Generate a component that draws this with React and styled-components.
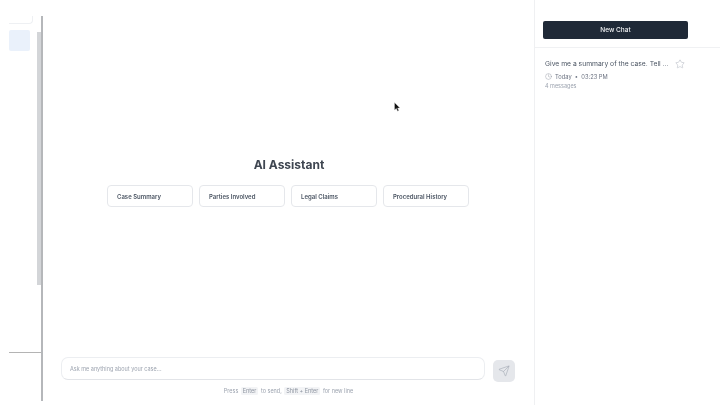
import styled, { createGlobalStyle } from "styled-components";
import { Clock, Star, Send } from "lucide-react";

const GlobalStyle = createGlobalStyle`
  html, body {
    margin: 0;
    height: 100%;
    background: #fff;
    overflow: hidden;
  }
  #root {
    height: 100%;
  }
  * {
    box-sizing: border-box;
  }
`;

const Page = styled.div`
  position: relative;
  display: flex;
  width: 720px;
  height: 405px;
  font-family: Inter, "Liberation Sans", sans-serif;
  color: #374151;
  filter: blur(0.45px);
`;

const Rail = styled.aside`
  display: flex;
  flex: 0 0 43px;
`;

const RailBody = styled.div`
  flex: 1;
  display: flex;
  flex-direction: column;
  padding-left: 9px;
`;

const RailCard = styled.div`
  width: 24px;
  height: 8px;
  margin-top: 16px;
  border-right: 1px solid #eef0f3;
  border-bottom: 1px solid #eef0f3;
  border-bottom-right-radius: 4px;
`;

const RailTile = styled.div`
  width: 21px;
  height: 21px;
  margin-top: 6px;
  border-radius: 2px;
  background: #eaf1fb;
`;

const RailDivider = styled.div`
  height: 1px;
  margin-top: 301px;
  margin-right: -6px;
  background: #b4b4b4;
`;

const Track = styled.div`
  flex: 0 0 6px;
  margin: 16px 0 4px;
  padding-top: 16px;
  border-right: 2px solid #b5b7ba;
`;

const Thumb = styled.div`
  height: 253px;
  background: #d3d5d8;
`;

const Main = styled.main`
  flex: 1;
  display: flex;
  flex-direction: column;
  align-items: center;
  min-width: 0;
`;

const Welcome = styled.div`
  display: flex;
  flex-direction: column;
  align-items: center;
  padding-top: 157px;
  flex: 1;
`;

const Title = styled.h1`
  margin: 0 0 0 1px;
  font-size: 12px;
  line-height: 16px;
  font-weight: 700;
  color: #3f4651;
`;

const Prompts = styled.div`
  display: flex;
  gap: 6px;
  margin: 12px 1px 0 0;
`;

const Prompt = styled.button`
  width: 86px;
  height: 22px;
  padding: 0 9px;
  border: 1px solid #e5e7eb;
  border-radius: 4px;
  background: #fff;
  font: 600 6px Inter, "Liberation Sans", sans-serif;
  color: #4b5563;
  text-align: left;
`;

const Composer = styled.div`
  display: flex;
  align-items: flex-start;
  gap: 8px;
  width: 454px;
  margin-right: 1px;
`;

const Input = styled.div`
  flex: 1;
  height: 23px;
  padding: 0 8px;
  display: flex;
  align-items: center;
  border: 1px solid #eceef1;
  border-bottom-color: #e2e4e8;
  border-radius: 7px;
  font-size: 5.5px;
  color: #9ca3af;
`;

const SendButton = styled.button`
  flex: 0 0 22px;
  height: 22px;
  margin-top: 3px;
  padding: 0;
  display: flex;
  align-items: center;
  justify-content: center;
  border: 0;
  border-radius: 5px;
  background: #e5e7eb;
  color: #9ca3af;
`;

const Hint = styled.p`
  display: flex;
  align-items: center;
  gap: 2.5px;
  margin: 4px 0 9px;
  height: 10px;
  font-size: 5.5px;
  color: #9ca3af;
`;

const Key = styled.kbd`
  padding: 1px 2px;
  border-radius: 1.5px;
  background: #f3f4f6;
  font: inherit;
  color: #8d94a0;
`;

const History = styled.aside`
  flex: 0 0 186px;
  display: flex;
  flex-direction: column;
  border-left: 1px solid #eff0f2;
`;

const HistoryHead = styled.div`
  height: 48px;
  padding: 21px 32px 0 8px;
  border-bottom: 1px solid #f0f1f3;
`;

const NewChat = styled.button`
  display: block;
  width: 100%;
  height: 18px;
  padding: 0;
  border: 0;
  border-radius: 2px;
  background: #1f2937;
  color: #f3f4f6;
  font: 500 6.5px Inter, "Liberation Sans", sans-serif;
`;

const ChatItem = styled.div`
  position: relative;
  padding: 12px 8px 0 10px;
`;

const ChatTitle = styled.div`
  font-size: 6.75px;
  line-height: 8px;
  color: #4b5563;
  white-space: nowrap;
`;

const ChatMeta = styled.div`
  display: flex;
  align-items: center;
  gap: 3px;
  margin-top: 4px;
  height: 8px;
  font-size: 5.75px;
  color: #6b7280;
`;

const ChatCount = styled.div`
  margin-top: 3px;
  font-size: 5.5px;
  line-height: 7px;
  color: #9ca3af;
`;

const StarButton = styled.span`
  position: absolute;
  top: 11px;
  right: 35px;
  display: flex;
  color: #9ca3af;
`;

const Cursor = styled.svg`
  position: absolute;
  left: 394px;
  top: 102px;
`;

const prompts = ["Case Summary", "Parties Involved", "Legal Claims", "Procedural History"];

const App = () => {
  return (
    <>
      <GlobalStyle />
      <Page>
        <Rail>
          <RailBody>
            <RailCard />
            <RailTile />
            <RailDivider />
          </RailBody>
          <Track>
            <Thumb />
          </Track>
        </Rail>
        <Main>
          <Welcome>
            <Title>AI Assistant</Title>
            <Prompts>
              {prompts.map((label) => (
                <Prompt key={label}>{label}</Prompt>
              ))}
            </Prompts>
          </Welcome>
          <Composer>
            <Input>Ask me anything about your case...</Input>
            <SendButton>
              <Send size={12} strokeWidth={1.1} />
            </SendButton>
          </Composer>
          <Hint>
            Press <Key>Enter</Key> to send, <Key>Shift + Enter</Key> for new line
          </Hint>
        </Main>
        <History>
          <HistoryHead>
            <NewChat>New Chat</NewChat>
          </HistoryHead>
          <ChatItem>
            <ChatTitle>Give me a summary of the case. Tell ...</ChatTitle>
            <ChatMeta>
              <Clock size={7} strokeWidth={1.1} />
              Today &nbsp;•&nbsp; 03:23 PM
            </ChatMeta>
            <ChatCount>4 messages</ChatCount>
            <StarButton>
              <Star size={10} strokeWidth={1} />
            </StarButton>
          </ChatItem>
        </History>
        <Cursor width="7" height="10" viewBox="0 0 7 10">
          <path d="M0.5 0.5 L0.5 8 L2.3 6.4 L3.6 9.2 L4.8 8.6 L3.6 6 L6 6 Z" fill="#111" stroke="#ddd" strokeWidth="0.4" />
        </Cursor>
      </Page>
    </>
  );
};

export default App;
